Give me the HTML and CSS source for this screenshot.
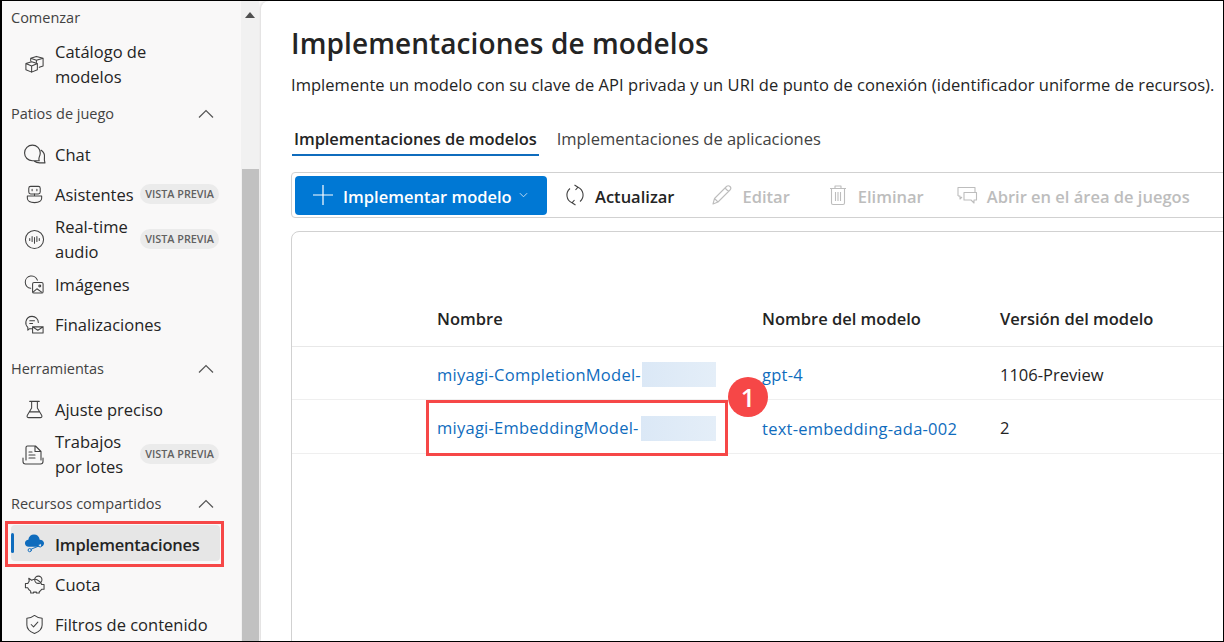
FILE: index.html
```html
<!DOCTYPE html>
<html lang="es">
<head>
<meta charset="utf-8">
<title>Implementaciones de modelos</title>
<link rel="stylesheet" href="styles.css">
</head>
<body>
<div class="frame">

<nav class="sidebar">
  <div class="nav-head"><span>Comenzar</span></div>
  <a class="nav-item tall-51">
    <svg class="ico" viewBox="0 0 22 22"><path d="M2 10l6-2 6 2v6.500l-6 2.500-6-2.500zM2 10l6 2.500 6-2.500M8 12.500V19M7 7V4.500l6-2 7 2v8l-4 1.500M7 4.500l6 2 7-2M13 6.500V8.500"/></svg>
    <span class="nav-text">Catálogo de<br>modelos</span>
  </a>

  <div class="nav-head"><span>Patios de juego</span><svg class="chev" viewBox="0 0 16 10"><path d="M1 8.500l7-7 7 7"/></svg></div>
  <a class="nav-item">
    <svg class="ico ico-chat" viewBox="0 0 22 22"><path d="M16.500 9.500a7.500 7.500 0 1 0-7.500 7.500h6.500c-.5-1-.5-2 0-3.500.5-1.200 1-2.500 1-4zM17.500 7c2 1.500 3.500 4 3 7-.2 1.500-.2 3 .5 5h-5c-2 0-3.500-.2-5-1.500"/></svg>
    <span class="nav-text">Chat</span>
  </a>
  <a class="nav-item">
    <svg class="ico" viewBox="0 0 22 22"><rect x="5" y="2.500" width="12" height="8" rx="2"/><path d="M8.500 5.500v1.500M13.500 5.500v1.500M11 10.500v2M3.500 12.500h15v2.500c0 3-3 4.500-7.500 4.500s-7.500-1.500-7.500-4.500z"/></svg>
    <span class="nav-text">Asistentes</span>
    <span class="pill">VISTA PREVIA</span>
  </a>
  <a class="nav-item tall">
    <svg class="ico" viewBox="0 0 22 22"><circle cx="11" cy="11" r="9.500"/><path d="M6 10v2M8.500 8v5M11 9v6M13.500 8v5M16 10v2"/></svg>
    <span class="nav-text">Real-time<br>audio</span>
    <span class="pill">VISTA PREVIA</span>
  </a>
  <a class="nav-item">
    <svg class="ico" viewBox="0 0 22 22"><path d="M7 15A6.500 6.500 0 1 1 14 6.500"/><rect x="9" y="9" width="11" height="11" rx="1.500"/><circle cx="16.500" cy="12.500" r="1"/><path d="M9.500 19l4-3.500 5 3.500"/></svg>
    <span class="nav-text">Imágenes</span>
  </a>
  <a class="nav-item">
    <svg class="ico" viewBox="0 0 22 22"><path d="M8 15.500H5.500L4 17v-3C2.500 12.500 1.500 10.500 2 8c.6-3 3-5.500 6.500-5.500s6.500 2.500 6.500 6.500M6 7h5M6 10h3"/><path d="M9 13.500h11v6.500H9zM9 13.500l5.500 3.500 5.500-3.500"/></svg>
    <span class="nav-text">Finalizaciones</span>
  </a>

  <div class="nav-head"><span>Herramientas</span><svg class="chev" viewBox="0 0 16 10"><path d="M1 8.500l7-7 7 7"/></svg></div>
  <a class="nav-item">
    <svg class="ico" viewBox="0 0 22 22"><path d="M6 2.500h10M8 2.500v7L3.500 17c-.8 1.500 0 2.500 1.500 2.500h12c1.500 0 2.300-1 1.500-2.500L14 9.500v-7M6 13.500h10"/></svg>
    <span class="nav-text">Ajuste preciso</span>
  </a>
  <a class="nav-item tall">
    <svg class="ico ico-lg" viewBox="0 0 24 24"><path d="M5 17V4.500C5 3.500 5.500 3 6.500 3h8l5.500 5.500V17M14 3v5.500h6M8 9h3M8 12h6M8 15h6M2 15v3.500C2 20 3 21 4.500 21h15c1.500 0 2.500-1 2.500-2.500V15"/></svg>
    <span class="nav-text">Trabajos<br>por lotes</span>
    <span class="pill">VISTA PREVIA</span>
  </a>

  <div class="nav-head"><span>Recursos compartidos</span><svg class="chev" viewBox="0 0 16 10"><path d="M1 8.500l7-7 7 7"/></svg></div>
  <a class="nav-item current">
    <svg class="ico ico-fill" viewBox="0 0 22 22"><path d="M5 15.500C2.500 15.500 1 13.700 1 11.700 1 9.500 2.800 8 4.500 8 5 4.500 7.500 2.500 10.500 2.500s5.500 2 6 5.500c2.500 0 4.500 1.700 4.500 3.800 0 2-1.500 3.700-4 3.700z"/><g class="ico-link"><path d="M7.500 18l8-3.300"/><circle cx="6" cy="19" r="1.700"/><circle cx="17" cy="14" r="1.700"/></g></svg>
    <span class="nav-text strong">Implementaciones</span>
  </a>
  <a class="nav-item">
    <svg class="ico" viewBox="0 0 22 22"><path d="M5 4.500l3 2c2-1 5-1 6.500 0 2 1 3.500 2.500 4 4.500H21v5h-2.500c-.5 1-1.500 2-2.500 2.500V20h-3v-1h-3v1H7v-2c-1.500-1-2.500-2-3-3.500H1.500V10H4c.3-1 .7-1.500 1.500-2.500z"/><circle cx="15" cy="6" r="3.800"/></svg>
    <span class="nav-text">Cuota</span>
  </a>
  <a class="nav-item">
    <svg class="ico" viewBox="0 0 22 22"><path d="M11 1.500c2.500 2 5 3 8 3v7c0 4-3 7-8 9-5-2-8-5-8-9v-7c3 0 5.500-1 8-3zM7.500 11l2.500 2.500 4.500-5"/></svg>
    <span class="nav-text">Filtros de contenido</span>
  </a>
  <div class="mark mark-nav"></div>
</nav>

<div class="scrollbar">
  <svg class="scroll-up" viewBox="0 0 10 6"><path d="M5 0l5 6H0z"/></svg>
  <div class="scroll-thumb"></div>
</div>

<main class="main">
  <h1>Implementaciones de modelos</h1>
  <p class="lead">Implemente un modelo con su clave de API privada y un URI de punto de conexión (identificador uniforme de recursos).</p>

  <div class="tabs">
    <span class="tab tab-on">Implementaciones de modelos</span>
    <span class="tab">Implementaciones de aplicaciones</span>
  </div>

  <div class="toolbar">
    <button class="btn-primary">
      <svg class="plus" viewBox="0 0 20 20"><path d="M10 0v20M0 10h20"/></svg>
      <span class="label">Implementar modelo</span>
      <svg class="caret" viewBox="0 0 10 6"><path d="M1 1l4 4 4-4"/></svg>
    </button>
    <span class="tool">
      <svg class="tool-ico" viewBox="0 0 22 22"><path d="M6 4.500A8.500 8.500 0 0 0 8 18.800M16 17.500A8.500 8.500 0 0 0 14 3.200M10.500 1l3.500 2.200L11.500 6M11.500 21L8 18.800l2.500-2.800"/></svg>
      <span class="label">Actualizar</span>
    </span>
    <span class="tool tool-off">
      <svg class="tool-ico" viewBox="0 0 22 22"><path d="M2 20l1.500-5.500L15.500 2.500c1-1 2.500-1 3.500 0s1 2.500 0 3.500L7 18zM3.500 14.500L7 18M14 4l3.500 3.500"/></svg>
      <span class="label">Editar</span>
    </span>
    <span class="tool tool-off">
      <svg class="tool-ico" viewBox="0 0 22 22"><path d="M3 4.500h16M8 4.500V2h6v2.500M4.500 4.500V19c0 1 .5 1.500 1.500 1.500h10c1 0 1.500-.5 1.500-1.500V4.500M8.500 8v9M11 8v9M13.500 8v9"/></svg>
      <span class="label">Eliminar</span>
    </span>
    <span class="tool tool-off tool-last">
      <svg class="tool-ico" viewBox="0 0 22 22"><path d="M2 12V3.500h17V8M2 12h2v3l2-2M8 8.500h12.500V16H18v3l-3-3H8z"/></svg>
      <span class="label">Abrir en el área de juegos</span>
    </span>
  </div>

  <section class="card">
    <table class="grid">
      <thead>
        <tr><th class="col-name">Nombre</th><th class="col-model">Nombre del modelo</th><th>Versión del modelo</th></tr>
      </thead>
      <tbody>
        <tr>
          <td class="col-name"><a>miyagi-CompletionModel-</a><span class="blur"></span></td>
          <td class="col-model"><a>gpt-4</a></td>
          <td>1106-Preview</td>
        </tr>
        <tr class="row-last">
          <td class="col-name"><a>miyagi-EmbeddingModel-</a><span class="blur blur-wide"></span>
            <div class="mark mark-row"></div>
            <span class="badge">1</span>
          </td>
          <td class="col-model"><a>text-embedding-ada-002</a></td>
          <td>2</td>
        </tr>
      </tbody>
    </table>
  </section>
</main>

</div>
</body>
</html>
```

FILE: styles.css
```css
html, body {
   margin: 0;
   padding: 0;
   background: #000;
}

body {
   font-family: "Open Sans", "Noto Sans", sans-serif;
   font-size: 16.500px;
   color: #242424;
}

.frame {
   display: flex;
   width: 1224px;
   height: 642px;
   box-sizing: border-box;
   border: 1px solid #000;
   border-left-width: 2px;
   overflow: hidden;
   background: #f9f8f8;
}

/* left nav */
.sidebar {
   position: relative;
   flex: none;
   width: 239px;
   height: 640px;
   padding: 0 0 0 9px;
   box-sizing: border-box;
   overflow: hidden;
}

.nav-head {
   display: flex;
   align-items: center;
   justify-content: space-between;
   height: 32px;
   margin: 8px 0 5px;
   padding-right: 27px;
   font-size: 14.500px;
   color: #424242;
}

.nav-head span {
   margin-top: -2px;
}

.nav-head:first-child {
   margin-top: 1px;
}

.chev {
   width: 16px;
   height: 10px;
   margin-top: -1px;
   fill: none;
   stroke: #555;
   stroke-width: 1.200;
}

.nav-item {
   position: relative;
   display: flex;
   align-items: center;
   width: 209px;
   height: 40px;
   box-sizing: border-box;
   padding-left: 13px;
}

.tall {
   height: 50px;
}

.tall-51 {
   height: 51px;
}

.nav-text {
   margin-left: 10px;
   margin-top: -2px;
   line-height: 25px;
}

.strong {
   margin-top: 3px;
   font-weight: 600;
   letter-spacing: -0.2px;
}

.ico {
   flex: none;
   width: 21px;
   height: 21px;
   margin-top: -1px;
   fill: none;
   stroke: #424242;
   stroke-width: 1.100;
   stroke-linejoin: round;
   stroke-linecap: round;
}

.ico-chat {
   width: 23px;
   height: 23px;
   margin-left: -1px;
   margin-right: -1px;
}

.ico-lg {
   width: 24px;
   height: 24px;
   margin-left: -3px;
}

.ico-fill path {
   fill: #0f6cbd;
   stroke: none;
}

.ico-fill .ico-link path,
.ico-fill .ico-link circle {
   fill: #e6e6e6;
   stroke: #0f6cbd;
   stroke-width: 1;
}

.pill {
   margin-left: auto;
   margin-right: 1px;
   margin-top: -2px;
   padding: 0 5px;
   height: 20px;
   line-height: 20px;
   border-radius: 10px;
   background: #ebebeb;
   color: #616161;
   font-size: 10.800px;
   font-weight: 600;
   white-space: nowrap;
}

.current {
   background: #e6e6e6;
   height: 36px;
   margin: 2px 0 4px;
   border-radius: 4px;
}

.current::before {
   content: "";
   position: absolute;
   left: 0;
   top: 8px;
   width: 3px;
   height: 20px;
   border-radius: 2px;
   background: #0f6cbd;
}

/* red annotation boxes */
.mark {
   position: absolute;
   border: 3px solid #f64747;
   box-sizing: border-box;
}

.mark-nav {
   left: 3px;
   top: 520px;
   width: 219px;
   height: 46px;
}

.mark-row {
   left: 134px;
   top: 0;
   width: 302px;
   height: 56px;
}

.badge {
   position: absolute;
   left: 436px;
   top: -23px;
   width: 40px;
   height: 40px;
   border-radius: 50%;
   background: #f64747;
   color: #fff;
   font-size: 25px;
   font-weight: 600;
   line-height: 40px;
   text-align: center;
}

/* scrollbar */
.scrollbar {
   position: relative;
   flex: none;
   width: 18px;
   margin-right: 2px;
   background: #f1f1f1;
}

.scroll-up {
   position: absolute;
   left: 4px;
   top: 11px;
   width: 10px;
   height: 6px;
   fill: #505050;
}

.scroll-thumb {
   position: absolute;
   left: 1px;
   right: 0;
   top: 168px;
   bottom: 0;
   background: #c1c1c1;
}

/* main panel */
.main {
   flex: 1;
   min-width: 0;
   padding: 0 0 0 30px;
   background: #fff;
   border-top-left-radius: 8px;
   box-shadow: -1px 0 3px rgba(0, 0, 0, 0.12);
}

h1 {
   margin: 22px 0 0;
   font-size: 28px;
   line-height: 40px;
   font-weight: 600;
   white-space: nowrap;
   letter-spacing: 0.1px;
}

.lead {
   margin: 10px 0 0;
   line-height: 24px;
   white-space: nowrap;
   letter-spacing: 0.04px;
}

.tabs {
   display: flex;
   gap: 16px;
   margin: 26px 0 0 1px;
   height: 33px;
   line-height: 32px;
   white-space: nowrap;
}

.tab {
   padding: 0 2px;
   color: #424242;
}

.tab-on {
   color: #242424;
   font-weight: 600;
   letter-spacing: -0.07px;
   border-bottom: 2px solid #0f6cbd;
   height: 31px;
}

.toolbar {
   display: flex;
   align-items: center;
   width: 1000px;
   height: 46px;
   margin: 16px 0 0;
   padding-left: 3px;
   box-sizing: border-box;
   border: 1px solid #d1d1d1;
   border-radius: 4px;
   white-space: nowrap;
}

.label {
   margin-top: 2px;
}

.btn-primary {
   display: flex;
   align-items: center;
   flex: none;
   width: 252px;
   height: 39px;
   padding: 0 0 0 18px;
   border: 0;
   border-radius: 4px;
   background: #0078d4;
   color: #fff;
   font: inherit;
   font-weight: 600;
}

.plus {
   width: 20px;
   height: 20px;
   margin-right: 10px;
   fill: none;
   stroke: #fff;
   stroke-width: 1.200;
}

.caret {
   width: 9px;
   height: 6px;
   margin-left: 7px;
   fill: none;
   stroke: #cfe3f5;
   stroke-width: 1;
}

.tool {
   display: inline-flex;
   align-items: center;
   gap: 9px;
   margin-left: 17px;
   font-weight: 600;
}

.tool-ico {
   width: 22px;
   height: 22px;
   fill: none;
   stroke: #424242;
   stroke-width: 1.100;
   stroke-linejoin: round;
}

.tool-off {
   color: #bdbdbd;
   margin-left: 37px;
}

.tool-last {
   margin-left: 32px;
}

.tool-off .tool-ico {
   stroke: #bdbdbd;
}

.card {
   width: 1000px;
   height: 500px;
   margin-top: 13px;
   border: 1px solid #d1d1d1;
   border-radius: 8px;
   box-sizing: border-box;
}

.grid {
   border-collapse: collapse;
   margin-top: 58px;
   width: 100%;
   table-layout: fixed;
}

.grid th {
   box-sizing: border-box;
   height: 56px;
   padding: 2px 0 0;
   text-align: left;
   font-weight: 600;
   border-bottom: 1px solid #e8e8e8;
}

.grid td {
   position: relative;
   box-sizing: border-box;
   height: 53px;
   padding: 3px 0 0;
   white-space: nowrap;
   border-bottom: 1px solid #efefef;
}

.grid .row-last td {
   height: 54px;
}

.grid .col-name {
   width: 470px;
   padding-left: 145px;
}

.grid .col-model {
   width: 238px;
}

.grid a {
   color: #0f6cbd;
   vertical-align: middle;
   letter-spacing: 0.25px;
}

.blur {
   display: inline-block;
   width: 74px;
   height: 25px;
   margin-left: 1px;
   background: linear-gradient(90deg, #dbe8f6, #e4eef8);
   vertical-align: middle;
}

.blur-wide {
   width: 75px;
   margin-left: 2px;
}
```
